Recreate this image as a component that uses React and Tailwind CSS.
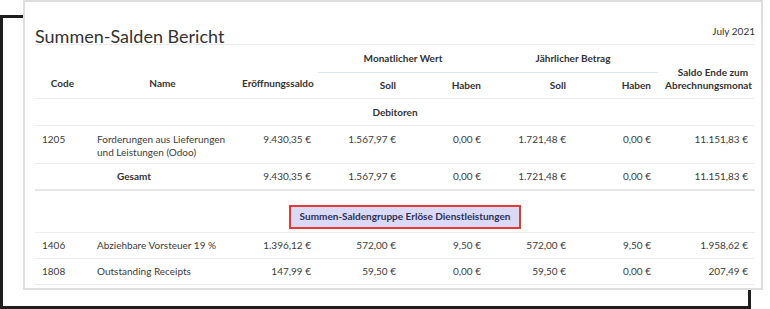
const rows = [
  { code: "1406", name: "Abziehbare Vorsteuer 19 %", open: "1.396,12 €", ms: "572,00 €", mh: "9,50 €", js: "572,00 €", jh: "9,50 €", end: "1.958,62 €" },
  { code: "1808", name: "Outstanding Receipts", open: "147,99 €", ms: "59,50 €", mh: "0,00 €", js: "59,50 €", jh: "0,00 €", end: "207,49 €" },
];

const th = "font-bold text-[10px] text-[#333] px-[7px]";
const td = "px-[7px] text-[10px] text-[#3c3c3c]";

const App = () => {
  return (
    <div className="relative w-[770px] h-[309px] bg-white overflow-hidden font-['Lato',sans-serif]">
      {/* dark frame behind the report card */}
      <div className="absolute left-0 top-[15px] w-[751px] h-[294px] border-[3px] border-[#1e1e1e]" />

      <div className="relative ml-[23px] w-[740px] h-[290px] bg-white border-2 border-[#dedede] pl-[10px] pr-[6px] pt-[22px]">
        <div className="flex justify-between items-end w-[720px]">
          <h1 className="text-[18px] leading-[16px] text-[#333]">Summen-Salden Bericht</h1>
          <span className="text-[10px] text-[#333] pb-[5px]">July 2021</span>
        </div>

        <table className="w-[720px] table-fixed border-collapse">
          <colgroup>
            <col className="w-[55px]" />
            <col className="w-[145px]" />
            <col className="w-[83px]" />
            <col className="w-[85px]" />
            <col className="w-[85px]" />
            <col className="w-[85px]" />
            <col className="w-[85px]" />
            <col className="w-[97px]" />
          </colgroup>
          <thead>
            <tr className="h-[28px] border-t border-[#ececec]">
              <th rowSpan={2} className={`${th} text-center align-bottom pb-[7px] border-b border-[#ececec]`}>Code</th>
              <th rowSpan={2} className={`${th} text-center align-bottom pb-[7px] border-b border-[#ececec]`}>Name</th>
              <th rowSpan={2} className={`${th} text-right align-bottom pb-[7px] border-b border-[#ececec]`}>Eröffnungssaldo</th>
              <th colSpan={2} className={`${th} text-center border-b border-[#dfe8f2]`}>Monatlicher Wert</th>
              <th colSpan={2} className={`${th} text-center border-b border-[#dfe8f2]`}>Jährlicher Betrag</th>
              <th rowSpan={2} className={`${th} text-right align-bottom pb-[6px] leading-[13px] border-b border-[#ececec]`}>
                Saldo Ende zum<br />Abrechnungsmonat
              </th>
            </tr>
            <tr className="h-[26px] border-b border-[#ececec]">
              <th className={`${th} text-right`}>Soll</th>
              <th className={`${th} text-right`}>Haben</th>
              <th className={`${th} text-right`}>Soll</th>
              <th className={`${th} text-right`}>Haben</th>
            </tr>
          </thead>
          <tbody>
            <tr className="h-[27px] border-b border-[#ececec]">
              <td colSpan={8} className="text-center font-bold text-[10px] text-[#333]">Debitoren</td>
            </tr>
            <tr className="border-b border-[#ececec]">
              <td className={`${td} align-top pt-[7px] pb-[4px] leading-[13px]`}>1205</td>
              <td className={`${td} align-top pt-[7px] pb-[4px] leading-[13px]`}>
                Forderungen aus Lieferungen und Leistungen (Odoo)
              </td>
              <td className={`${td} align-top pt-[7px] leading-[13px] text-right`}>9.430,35 €</td>
              <td className={`${td} align-top pt-[7px] leading-[13px] text-right`}>1.567,97 €</td>
              <td className={`${td} align-top pt-[7px] leading-[13px] text-right`}>0,00 €</td>
              <td className={`${td} align-top pt-[7px] leading-[13px] text-right`}>1.721,48 €</td>
              <td className={`${td} align-top pt-[7px] leading-[13px] text-right`}>0,00 €</td>
              <td className={`${td} align-top pt-[7px] leading-[13px] text-right`}>11.151,83 €</td>
            </tr>
            <tr className="h-[26px] border-b-2 border-[#e6e6e6]">
              <td className={td}></td>
              <td className={`${td} font-bold text-[#333] pl-[27px]`}>Gesamt</td>
              <td className={`${td} text-right`}>9.430,35 €</td>
              <td className={`${td} text-right`}>1.567,97 €</td>
              <td className={`${td} text-right`}>0,00 €</td>
              <td className={`${td} text-right`}>1.721,48 €</td>
              <td className={`${td} text-right`}>0,00 €</td>
              <td className={`${td} text-right`}>11.151,83 €</td>
            </tr>
            <tr className="border-b border-[#ececec]">
              <td colSpan={8} className="pt-[14px] pb-[3px] pl-[254px]">
                <div className="w-[232px] h-[24px] flex items-center justify-center bg-[#dadaf7] border-2 border-[#e53935] text-[10px] font-bold text-[#2f2f55]">
                  Summen-Saldengruppe Erlöse Dienstleistungen
                </div>
              </td>
            </tr>
            {rows.map((r) => (
              <tr key={r.code} className="h-[26px] border-b border-[#ececec]">
                <td className={td}>{r.code}</td>
                <td className={td}>{r.name}</td>
                <td className={`${td} text-right`}>{r.open}</td>
                <td className={`${td} text-right`}>{r.ms}</td>
                <td className={`${td} text-right`}>{r.mh}</td>
                <td className={`${td} text-right`}>{r.js}</td>
                <td className={`${td} text-right`}>{r.jh}</td>
                <td className={`${td} text-right`}>{r.end}</td>
              </tr>
            ))}
          </tbody>
        </table>
      </div>
    </div>
  );
};

export default App;
